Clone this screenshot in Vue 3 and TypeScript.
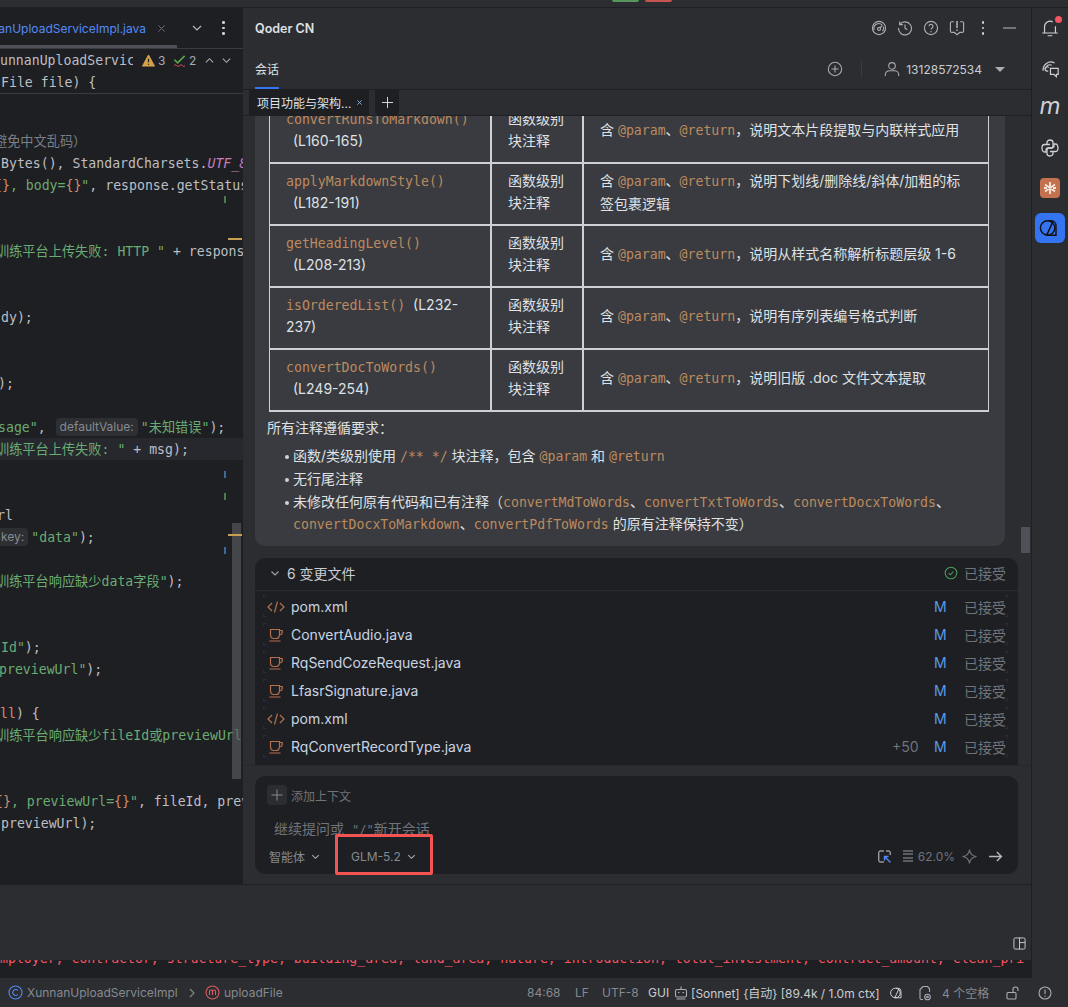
<template>
  <div class="app">
    <div class="top-strip">
      <span class="chip chip-green"></span>
      <span class="chip chip-red"></span>
    </div>

    <div class="workspace">
      <div class="left-col">
        <div class="main-row">
          <!-- editor -->
          <section class="editor">
            <div class="editor-tabs">
              <div class="file-tab-clip"><span class="file-tab">nanUploadServiceImpl.java</span></div>
              <svg class="tab-close" viewBox="0 0 10 10"><path d="M1.5 1.5l7 7M8.5 1.5l-7 7" /></svg>
              <svg class="tab-chev" viewBox="0 0 12 12"><path d="M2 4l4 4 4-4" /></svg>
              <span class="tab-dots"><i></i><i></i><i></i></span>
              <span class="tab-scroll"></span>
            </div>
            <div class="sticky">
              <div class="code-line"><span class="code-inner" style="margin-left: -8px">XunnanUploadService</span></div>
              <div class="code-line"><span class="code-inner" style="margin-left: 1px">File file) {</span></div>
              <div class="inspect">
                <svg class="ins-warn" viewBox="0 0 14 14"><path d="M7 1L13.500 13H.5z" fill="#d5a24a" stroke="#d5a24a" stroke-linejoin="round" /><path d="M7 5v4M7 10.400v1.200" stroke="#1e1f22" stroke-width="1.400" /></svg>
                <span class="ins-num">3</span>
                <svg class="ins-ok" viewBox="0 0 14 14"><path d="M1.500 6l3.500 3.500L12.500 2" stroke="#57a64a" stroke-width="1.700" fill="none" /><path d="M1 12.500q1.500-2 3 0t3 0 3 0 3 0" stroke="#d95757" fill="none" /></svg>
                <span class="ins-num">2</span>
                <svg class="ins-chev up" viewBox="0 0 12 12"><path d="M2 8l4-4 4 4" /></svg>
                <svg class="ins-chev" viewBox="0 0 12 12"><path d="M2 4l4 4 4-4" /></svg>
              </div>
            </div>
            <div class="code">
              <div v-for="(line, i) in codeLines" :key="i" class="code-line" :class="{ current: line.current }">
                <span class="code-inner" :style="{ marginLeft: line.x + 'px' }">
                  <template v-for="(seg, j) in line.segs" :key="j">
                    <span v-if="seg.c === 'hint'" class="hint">{{ seg.t }}</span>
                    <span v-else :class="seg.c">{{ seg.t }}</span>
                  </template>
                </span>
              </div>
              <span class="v-scroll"></span>
              <span v-for="m in marks" :key="m.y" class="mark" :class="m.c" :style="{ top: m.y - 94 + 'px' }"></span>
            </div>
          </section>

          <!-- qoder panel -->
          <section class="panel">
            <div class="panel-title">
              <span class="title-text">Qoder CN</span>
              <div class="title-icons">
                <svg viewBox="0 0 18 18"><circle cx="9" cy="9" r="7.400" /><path d="M3.500 11a5.500 5.500 0 0 1 9-5.500M14 7.500a5.500 5.500 0 0 1-1 5" /><circle cx="9" cy="10" r="1.700" /><path d="M10 9l2.800-3" /></svg>
                <svg viewBox="0 0 18 18"><path d="M3.200 5A7.300 7.300 0 1 1 1.700 9" /><path d="M3 1.600V5.200h3.600" /><path d="M9 5.200V9.300l2.600 1.700" /></svg>
                <svg viewBox="0 0 18 18"><circle cx="9" cy="9" r="7.400" /><path d="M6.800 7a2.200 2.200 0 1 1 3.400 1.900c-.8.5-1.200 1-1.200 1.900" /><path d="M9 12.400v1.300" /></svg>
                <svg viewBox="0 0 18 18"><path d="M5.500 2H3a1.400 1.400 0 0 0-1.400 1.400v9.200A1.400 1.400 0 0 0 3 14h3l3 2.600 3-2.600h3a1.400 1.400 0 0 0 1.400-1.400V3.400A1.400 1.400 0 0 0 15 2h-2.500" /><path d="M9 1v8M9 10.600V12.300" stroke-width="1.800" /></svg>
                <span class="dots"><i></i><i></i><i></i></span>
                <span class="minus"></span>
              </div>
            </div>
            <div class="panel-tabs">
              <span class="tab-active">会话</span>
              <div class="account">
                <svg class="acc-plus" viewBox="0 0 18 18"><circle cx="9" cy="9" r="7.500" /><path d="M9 5v8M5 9h8" /></svg>
                <span class="acc-divider"></span>
                <svg class="acc-user" viewBox="0 0 18 18"><circle cx="9" cy="5.500" r="3.700" /><path d="M1.500 17v-1.500A4.500 4.500 0 0 1 6 11h6a4.500 4.500 0 0 1 4.500 4.500V17" /></svg>
                <span class="acc-name">13128572534</span>
                <span class="caret"></span>
              </div>
            </div>
            <div class="session-row">
              <div class="session-tab">
                <span>项目功能与架构...</span>
                <svg viewBox="0 0 8 8"><path d="M1.500 1.500l5 5M6.500 1.500l-5 5" /></svg>
              </div>
              <div class="session-add">
                <svg viewBox="0 0 14 14"><path d="M7 1v12M1 7h12" /></svg>
              </div>
            </div>

            <div class="scroll-area">
              <div class="msg-card">
                <table class="notes">
                  <colgroup><col class="c1" /><col class="c2" /><col class="c3" /></colgroup>
                  <tbody>
                    <tr v-for="row in rows" :key="row.fn">
                      <td>
                        <code>{{ row.fn }}</code><span :class="row.inline ? 'ln-inline' : 'ln'">{{ row.lines }}</span>
                      </td>
                      <td>函数级别<br />块注释</td>
                      <td>含 <code>@param</code>、<code>@return</code>，{{ row.desc }}</td>
                    </tr>
                  </tbody>
                </table>
                <p class="summary">所有注释遵循要求：</p>
                <ul class="rules">
                  <li>函数/类级别使用 <code>/** */</code> 块注释，包含 <code>@param</code> 和 <code>@return</code></li>
                  <li>无行尾注释</li>
                  <li>未修改任何原有代码和已有注释（<code>convertMdToWords</code>、<code>convertTxtToWords</code>、<code>convertDocxToWords</code>、<code>convertDocxToMarkdown</code>、<code>convertPdfToWords</code> 的原有注释保持不变）</li>
                </ul>
              </div>

              <div class="files-card">
                <div class="files-head">
                  <svg class="chev" viewBox="0 0 12 12"><path d="M2.500 4.500L6 8l3.500-3.500" /></svg>
                  <span class="files-title">6 变更文件</span>
                  <svg class="ok-icon" viewBox="0 0 14 14"><circle cx="7" cy="7" r="5.800" /><path d="M4.600 7.200l1.700 1.600 3-3.200" /></svg>
                  <span class="accepted">已接受</span>
                </div>
                <div class="files-list">
                  <div v-for="(f, i) in files" :key="i" class="file-row">
                    <svg v-if="f.xml" class="file-icon" viewBox="0 0 18 14"><path d="M5 3L1 7l4 4M13 3l4 4-4 4M10.500 1.500l-3 11" /></svg>
                    <svg v-else class="file-icon" viewBox="0 0 18 14"><path d="M3.500 1.500h9v5.500a3.500 3.500 0 0 1-3.500 3.500H7A3.500 3.500 0 0 1 3.500 7zM12.500 2.500h2.700v2.200a2 2 0 0 1-2.700 1.900M2.500 13h11" /></svg>
                    <span class="file-name">{{ f.name }}</span>
                    <span class="file-plus">{{ f.plus }}</span>
                    <span class="file-m">M</span>
                    <span class="accepted">已接受</span>
                  </div>
                </div>
              </div>
              <span class="chat-scroll"></span>
            </div>

            <div class="input-wrap">
              <div class="input-card">
                <div class="ctx-row">
                  <span class="ctx-add"><svg viewBox="0 0 12 12"><path d="M6 .5v11M.5 6h11" /></svg></span>
                  <span>添加上下文</span>
                </div>
                <div class="placeholder">继续提问或<span class="ph-q">"/"</span>新开会话</div>
                <div class="tool-row">
                  <span class="tool-sel">智能体<svg viewBox="0 0 12 12"><path d="M2.500 4.500L6 8l3.500-3.500" /></svg></span>
                  <span class="tool-sel model">GLM-5.2<svg viewBox="0 0 12 12"><path d="M2.500 4.500L6 8l3.500-3.500" /></svg></span>
                  <div class="tool-right">
                    <svg class="t-frame" viewBox="0 0 13 13"><path d="M6 1H2a1.200 1.200 0 0 0-1.200 1.200v8.600A1.200 1.200 0 0 0 2 12h4M8 1h3a1.200 1.200 0 0 1 1.200 1.200V5" stroke="#ced0d6" /><path d="M12.500 12.500L6.500 6.500M6.500 10.500v-4h4" stroke="#548af7" stroke-width="1.400" /></svg>
                    <span class="t-bars"><i></i><i></i><i></i><i></i></span>
                    <span class="t-pct">62.0%</span>
                    <svg class="t-spark" viewBox="0 0 16 16"><path d="M8 .5c.5 4.500 3 7 7.500 7.500-4.500.5-7 3-7.500 7.500C7.500 11 5 8.500.5 8 5 7.500 7.500 5 8 .5z" /></svg>
                    <svg class="t-send" viewBox="0 0 16 12"><path d="M1 6h13.500M9.500 1l5 5-5 5" /></svg>
                  </div>
                </div>
                <span class="annotation"></span>
              </div>
            </div>
          </section>
        </div>

        <div class="tool-panel">
          <svg viewBox="0 0 14 14"><rect x="1" y="1" width="12" height="12" rx="1.500" /><path d="M7 1v12M7 6h6" /></svg>
        </div>
        <div class="console">
          <div class="console-line">mployer, contractor, structure_type, building_area, land_area, nature, introduction, total_investment, contract_amount, clean_pri</div>
        </div>
      </div>

      <aside class="rail">
        <span class="rail-item bell">
          <svg viewBox="0 0 22 22"><path d="M5 16V9.500a6 6 0 0 1 9-5.200M17 9v7M2.500 16.500h17M8.500 19.500h5" /></svg>
          <i class="bell-dot"></i>
        </span>
        <span class="rail-item">
          <svg viewBox="0 0 22 22"><path d="M3.500 14A8.500 8.500 0 0 1 16 5.500M6 12.500a4.800 4.800 0 0 1 7-4.500M9 14a2.300 2.300 0 1 1 .5-3.500" /><path d="M11.500 11.500h8.500v6.500h-2v2.500l-2.800-2.500h-3.700z" /></svg>
        </span>
        <span class="rail-item rail-m">m</span>
        <span class="rail-item">
          <svg viewBox="0 0 20 20">
            <path d="M7 6.500V4.500C7 3 8.300 2 10 2s3 1 3 2.500V8c0 1.100-.9 2-2 2H8.500C7.100 10 6 11.100 6 12.500V14H4.500C3 14 2 12.500 2 10s1-3.500 2.500-3.500H10M9.300 4.300v.01" />
            <path d="M7 6.500V4.500C7 3 8.300 2 10 2s3 1 3 2.500V8c0 1.100-.9 2-2 2H8.500C7.100 10 6 11.100 6 12.500V14H4.500C3 14 2 12.500 2 10s1-3.500 2.500-3.500H10M9.300 4.300v.01" transform="rotate(180 10 10)" />
          </svg>
        </span>
        <span class="rail-item">
          <span class="orange-box">
            <svg viewBox="0 0 20 20"><path d="M10 4v12M5 6.500l10 7M15 6.500l-10 7M4 10h3M13 10h3" /></svg>
          </span>
        </span>
        <span class="rail-item">
          <span class="blue-btn">
            <svg viewBox="0 0 20 20"><circle cx="8" cy="10" r="6" /><path d="M9 4h2a4 4 0 0 1 4 4v8h-6a5 5 0 0 1-3-1M12.500 4.500L7.500 15.500" /></svg>
          </span>
        </span>
      </aside>
    </div>

    <footer class="status">
      <svg class="st-c" viewBox="0 0 15 15"><circle cx="7.500" cy="7.500" r="6.500" /><path d="M10 5.500a3 3 0 1 0 0 4" /></svg>
      <span class="st-class">XunnanUploadServiceImpl</span>
      <svg class="st-sep" viewBox="0 0 8 12"><path d="M2 2l4 4-4 4" /></svg>
      <svg class="st-m" viewBox="0 0 15 15"><circle cx="7.500" cy="7.500" r="6.500" /><path d="M4.500 10V6.500a1.300 1.300 0 0 1 3 0V10M7.500 6.500a1.300 1.300 0 0 1 3 0V10" /></svg>
      <span class="st-fn">uploadFile</span>
      <span class="st-pos">84:68</span>
      <span class="st-lf">LF</span>
      <span class="st-enc">UTF-8</span>
      <span class="st-gui">GUI</span>
      <svg class="st-robot" viewBox="0 0 14 14"><path d="M7 .5v2.500" /><rect x="1.500" y="3.500" width="11" height="7.500" rx="1.500" /><path d="M4 6.500h1.500M8.500 6.500H10M2.500 13h9" /></svg>
      <span class="st-model">[Sonnet] {自动} [89.4k / 1.0m ctx]</span>
      <svg class="st-qoder" viewBox="0 0 20 20"><circle cx="8" cy="10" r="6" /><path d="M9 4h2a4 4 0 0 1 4 4v8h-6a5 5 0 0 1-3-1M12.500 4.500L7.500 15.500" /></svg>
      <svg class="st-file" viewBox="0 0 14 16"><path d="M5 1.500h4.500l2 2V7M5 14.500H3.500a1.500 1.500 0 0 1-1.500-1.500V4.500l3-3" /><circle cx="9.500" cy="12" r="2.800" /><circle cx="9.500" cy="12" r=".8" /></svg>
      <span class="st-indent">4 个空格</span>
      <svg class="st-lock" viewBox="0 0 14 14"><rect x="1" y="6.500" width="9" height="6.500" rx="1" /><path d="M7 6.500V3.500a2.500 2.500 0 0 1 5 0V5" /></svg>
      <svg class="st-warn" viewBox="0 0 14 14"><circle cx="7" cy="7" r="6" /><path d="M7 3.500v4.500M7 9.500v1.200" /></svg>
    </footer>
  </div>
</template>

<script setup lang="ts">
interface Seg { t: string; c: string }
interface CodeLine { x: number; segs: Seg[]; current?: boolean }

const s = (t: string, c = 'plain'): Seg => ({ t, c })

const blank = (): CodeLine => ({ x: 0, segs: [] })

const codeLines: CodeLine[] = [
  { x: -6, segs: [s('避免中文乱码）', 'cmt')] },
  { x: 1, segs: [s('Bytes(), StandardCharsets.'), s('UTF_8);', 'field')] },
  { x: -6, segs: [s('{}', 'kw'), s(', body=', 'str'), s('{}', 'kw'), s('"', 'str'), s(', response.getStatusLine()')] },
  blank(),
  blank(),
  { x: -4, segs: [s('训练平台上传失败: HTTP " ', 'str'), s('+ response.getStatus')] },
  blank(),
  blank(),
  { x: 1, segs: [s('dy);')] },
  blank(),
  blank(),
  { x: -2, segs: [s(');')] },
  blank(),
  { x: -2, segs: [s('sage"', 'str'), s(', '), s('defaultValue:', 'hint'), s('"未知错误"', 'str'), s(');')] },
  { x: -4, current: true, segs: [s('训练平台上传失败: " ', 'str'), s('+ msg);')] },
  blank(),
  blank(),
  { x: -3, segs: [s('rl')] },
  { x: -5, segs: [s('key:', 'hint'), s('"data"', 'str'), s(');')] },
  blank(),
  { x: -4, segs: [s('训练平台响应缺少data字段"', 'str'), s(');')] },
  blank(),
  blank(),
  { x: 1, segs: [s('Id"', 'str'), s(');')] },
  { x: -1, segs: [s('previewUrl"', 'str'), s(');')] },
  blank(),
  { x: 0, segs: [s('ll', 'kw'), s(') {')] },
  { x: -4, segs: [s('训练平台响应缺少fileId或previewUrl', 'str')] },
  blank(),
  blank(),
  { x: -5, segs: [s('{}', 'kw'), s(', previewUrl=', 'str'), s('{}', 'kw'), s('"', 'str'), s(', fileId, previewUrl')] },
  { x: 1, segs: [s('previewUrl);')] },
  blank(),
  blank(),
]

const marks = [
  { y: 196, c: 'm-green' },
  { y: 238, c: 'm-orange' },
  { y: 471, c: 'm-blue' },
  { y: 493, c: 'm-green' },
  { y: 534, c: 'm-orange' },
  { y: 547, c: 'm-blue' },
]

const rows = [
  { fn: 'convertRunsToMarkdown()', lines: '(L160-165)', inline: false, desc: '说明文本片段提取与内联样式应用' },
  { fn: 'applyMarkdownStyle()', lines: '(L182-191)', inline: false, desc: '说明下划线/删除线/斜体/加粗的标签包裹逻辑' },
  { fn: 'getHeadingLevel()', lines: '(L208-213)', inline: false, desc: '说明从样式名称解析标题层级 1-6' },
  { fn: 'isOrderedList()', lines: '(L232-237)', inline: true, desc: '说明有序列表编号格式判断' },
  { fn: 'convertDocToWords()', lines: '(L249-254)', inline: false, desc: '说明旧版 .doc 文件文本提取' },
]

const files = [
  { name: 'pom.xml', xml: true, plus: '' },
  { name: 'ConvertAudio.java', xml: false, plus: '' },
  { name: 'RqSendCozeRequest.java', xml: false, plus: '' },
  { name: 'LfasrSignature.java', xml: false, plus: '' },
  { name: 'pom.xml', xml: true, plus: '' },
  { name: 'RqConvertRecordType.java', xml: false, plus: '+50' },
]
</script>

<style>
html,
body {
  margin: 0;
  background: #2b2d30;
}
</style>

<style scoped>
.app {
  width: 1068px;
  height: 1007px;
  display: flex;
  flex-direction: column;
  overflow: hidden;
  background: #2b2d30;
  color: #dfe1e5;
  font-family: Inter, "Noto Sans CJK SC", sans-serif;
  font-size: 14px;
}

svg {
  display: block;
  fill: none;
  stroke: currentColor;
  flex: 0 0 auto;
}

/* top strip */
.top-strip {
  height: 7px;
  flex: 0 0 auto;
  display: flex;
  gap: 6px;
  padding-left: 612px;
  border-bottom: 1px solid #1e1f22;
}
.chip {
  width: 27px;
  height: 2px;
  border-radius: 0 0 4px 4px;
}
.chip-green { background: #57965c; }
.chip-red { background: #c75450; }

.workspace {
  flex: 1;
  min-height: 0;
  display: flex;
}
.left-col {
  width: 1031px;
  flex: 0 0 auto;
  display: flex;
  flex-direction: column;
}
.main-row {
  height: 876px;
  flex: 0 0 auto;
  display: flex;
  border-bottom: 1px solid #1e1f22;
  box-sizing: content-box;
}

/* editor */
.editor {
  width: 243px;
  flex: 0 0 auto;
  background: #1e1f22;
  display: flex;
  flex-direction: column;
  overflow: hidden;
  font-family: "DejaVu Sans Mono", "Noto Sans CJK SC", monospace;
  font-size: 13.2px;
  color: #bcbec4;
}
.editor-tabs {
  height: 40px;
  flex: 0 0 auto;
  position: relative;
  display: flex;
  align-items: center;
  border-bottom: 1px solid #393b40;
  color: #868a91;
  font-family: Inter, sans-serif;
}
.file-tab-clip {
  width: 146px;
  display: flex;
  justify-content: flex-end;
  overflow: hidden;
}
.file-tab {
  flex: 0 0 auto;
  color: #548af7;
  font-size: 12px;
  white-space: nowrap;
}
.tab-close {
  width: 9px;
  height: 9px;
  margin-left: 11px;
  stroke: #6f737a;
}
.tab-chev {
  width: 12px;
  height: 12px;
  margin-left: 25px;
  stroke: #b4b8bf;
  stroke-width: 1.2;
}
.tab-dots {
  display: flex;
  flex-direction: column;
  gap: 3px;
  margin-left: 19px;
}
.tab-dots i,
.dots i {
  width: 2.5px;
  height: 2.5px;
  border-radius: 50%;
  background: #ced0d6;
  display: block;
}
.tab-scroll {
  position: absolute;
  left: 0;
  bottom: 0;
  width: 177px;
  height: 3px;
  background: #4e5157;
}
.sticky {
  position: relative;
  flex: 0 0 auto;
  border-bottom: 1px solid #393b40;
}
.code-line {
  height: 22px;
  line-height: 24px;
  white-space: pre;
  display: flex;
  overflow: hidden;
}
.code-inner {
  display: block;
  flex: 0 0 auto;
}
.inspect {
  position: absolute;
  left: 133px;
  right: 0;
  top: 0;
  height: 22px;
  background: #1e1f22;
  display: flex;
  align-items: center;
  font-family: Inter, sans-serif;
  font-size: 12px;
  color: #a8adb5;
}
.ins-warn {
  width: 13px;
  height: 13px;
  margin-left: 9px;
  stroke: none;
}
.ins-num { margin-left: 3px; width: 8px; }
.ins-ok {
  width: 13px;
  height: 13px;
  margin-left: 7px;
}
.ins-chev {
  width: 11px;
  height: 11px;
  stroke: #a8adb5;
  stroke-width: 1.2;
  margin-left: 6px;
}
.ins-chev.up { margin-left: 7px; }

.code {
  flex: 1;
  position: relative;
  padding-top: 36px;
  min-height: 0;
}
.current { background: #26282e; }
.plain { color: #bcbec4; }
.str { color: #6aab73; }
.kw { color: #cf8e6d; }
.cmt { color: #7a7e85; }
.field { color: #c77dbb; font-style: italic; }
.hint {
  display: inline-block;
  font-family: Inter, sans-serif;
  font-size: 12px;
  line-height: 18px;
  height: 18px;
  padding: 0 4px;
  margin: 0 3px 0 2px;
  border-radius: 4px;
  background: #2d2f33;
  color: #868a91;
  vertical-align: 1px;
}
.v-scroll {
  position: absolute;
  left: 232px;
  top: 429px;
  width: 9px;
  height: 256px;
  background: rgba(90, 92, 96, 0.65);
}
.mark {
  position: absolute;
  height: 5px;
  width: 2px;
  left: 224px;
}
.m-green { background: #4a7a54; height: 7px; }
.m-blue { background: #3d6a9e; height: 7px; }
.m-orange {
  background: #c9a050;
  left: 228px;
  width: 14px;
  height: 2px;
}

/* panel */
.panel {
  flex: 1;
  min-width: 0;
  display: flex;
  flex-direction: column;
  background: #2b2d30;
}
.panel-title {
  height: 40px;
  flex: 0 0 auto;
  display: flex;
  align-items: center;
  justify-content: space-between;
  padding: 0 9px 0 12px;
}
.title-text {
  font-size: 12.5px;
  font-weight: 600;
  color: #dfe1e5;
}
.title-icons {
  display: flex;
  align-items: center;
  color: #a8adb5;
}
.title-icons svg {
  width: 16px;
  height: 16px;
  margin: 0 5px;
  stroke-width: 1.3;
}
.dots {
  width: 26px;
  display: flex;
  flex-direction: column;
  align-items: center;
  gap: 3px;
}
.minus {
  display: block;
  width: 13px;
  height: 1.5px;
  background: #6f737a;
  margin: 0 6px 0 7px;
}
.panel-tabs {
  height: 41px;
  flex: 0 0 auto;
  display: flex;
  justify-content: space-between;
  padding: 0 26px 0 12px;
  border-bottom: 1px solid #1e1f22;
}
.tab-active {
  width: 24px;
  height: 39px;
  line-height: 43px;
  font-size: 12px;
  text-align: center;
  border-bottom: 2px solid #3574f0;
  white-space: nowrap;
}
.account {
  display: flex;
  align-items: center;
  height: 42px;
  color: #a8adb5;
}
.acc-plus {
  width: 16px;
  height: 16px;
  stroke-width: 1.2;
}
.acc-divider {
  width: 1px;
  height: 17px;
  margin: 0 22px 0 18px;
  background: #393b40;
}
.acc-user {
  width: 16px;
  height: 16px;
  stroke-width: 1.2;
}
.acc-name {
  font-size: 12px;
  margin-left: 6px;
  color: #c9ccd3;
}
.caret {
  width: 0;
  height: 0;
  margin-left: 13px;
  border-left: 5px solid transparent;
  border-right: 5px solid transparent;
  border-top: 5px solid #a8adb5;
}
.session-row {
  height: 25px;
  flex: 0 0 auto;
  display: flex;
  gap: 6px;
  padding-left: 6px;
  border-bottom: 1px solid #1e1f22;
}
.session-tab {
  width: 120px;
  box-sizing: border-box;
  display: flex;
  align-items: center;
  justify-content: space-between;
  padding: 0 6px 0 8px;
  background: #1e1f22;
  font-size: 12px;
  color: #dfe1e5;
}
.session-tab svg {
  width: 7px;
  height: 7px;
  stroke: #8db6ea;
}
.session-add {
  width: 24px;
  display: flex;
  align-items: center;
  justify-content: center;
  background: #1e1f22;
  border-radius: 0 0 4px 4px;
  color: #dfe1e5;
}
.session-add svg {
  width: 13px;
  height: 13px;
}

.scroll-area {
  height: 650px;
  flex: 0 0 auto;
  overflow: hidden;
  position: relative;
  border-bottom: 1px solid #26282c;
  box-sizing: border-box;
  padding-left: 12px;
}
.msg-card {
  width: 750px;
  box-sizing: border-box;
  margin-top: -14px;
  padding: 0 0 10px 14px;
  background: #393b40;
  border-radius: 0 0 10px 10px;
}
code {
  font-family: "DejaVu Sans Mono", monospace;
  font-size: 13.2px;
  line-height: 1;
  color: #bd8a5e;
}
.notes {
  width: 720px;
  table-layout: fixed;
  border-collapse: separate;
  border-spacing: 0;
  line-height: 22.4px;
  color: #dfe1e5;
}
.c1 { width: 223px; }
.c2 { width: 92px; }
.c3 { width: 405px; }
.notes td {
  height: 62px;
  box-sizing: border-box;
  padding: 6px 16px 9px;
  vertical-align: top;
  border-right: 2px solid #ced0d6;
  border-bottom: 2px solid #ced0d6;
}
.notes td:first-child {
  border-left: 1px solid #ced0d6;
  padding-left: 16px;
}
.notes td:last-child {
  border-right: 1px solid #ced0d6;
  vertical-align: middle;
}
.ln {
  display: block;
  padding-left: 7px;
}
.ln-inline { margin-left: 8px; }
.summary {
  margin: 5px 0 6px -2px;
  line-height: 22px;
}
.rules {
  margin: 0;
  padding: 0 0 0 24px;
  list-style: none;
  width: 700px;
  line-height: 22.4px;
}
.rules li {
  position: relative;
  margin-bottom: 0.6px;
}
.rules li:last-child { margin-bottom: 0; }
.rules li::before {
  content: '';
  position: absolute;
  left: -8px;
  top: 10px;
  width: 4px;
  height: 4px;
  border-radius: 50%;
  background: #ced0d6;
}
.files-card {
  width: 763px;
  margin-top: 12px;
  background: #1e1f22;
  border-radius: 10px 10px 0 0;
}
.files-head {
  height: 30px;
  display: flex;
  align-items: center;
  padding: 0 12px 2px 14px;
  border-bottom: 1px solid #2b2d30;
  box-sizing: content-box;
}
.chev {
  width: 12px;
  height: 12px;
  stroke: #9fa2a8;
  stroke-width: 1.2;
}
.files-title {
  margin-left: 6px;
  color: #c9ccd3;
  font-size: 14px;
  flex: 1;
}
.ok-icon {
  width: 14px;
  height: 14px;
  stroke: #4a9a5a;
  stroke-width: 1.1;
  margin-right: 6px;
}
.accepted {
  width: 42px;
  color: #6f737a;
  white-space: nowrap;
}
.files-list { padding: 2px 12px 8px 8px; }
.file-row {
  height: 28px;
  display: flex;
  align-items: center;
  position: relative;
}
.file-row::before {
  content: '';
  position: absolute;
  inset: 2px -2px 4px 0;
  --c: linear-gradient(#262d42, #262d42);
  background:
    var(--c) left top / 3px 1px no-repeat,
    var(--c) left top / 1px 3px no-repeat,
    var(--c) right top / 3px 1px no-repeat,
    var(--c) right top / 1px 3px no-repeat,
    var(--c) left bottom / 3px 1px no-repeat,
    var(--c) left bottom / 1px 3px no-repeat,
    var(--c) right bottom / 3px 1px no-repeat,
    var(--c) right bottom / 1px 3px no-repeat;
}
.file-icon {
  width: 18px;
  height: 14px;
  margin-left: 4px;
  stroke: #b4704e;
  stroke-width: 1.2;
}
.file-name {
  margin-left: 6px;
  color: #c9d4e2;
  flex: 1;
}
.file-plus {
  color: #6f737a;
  width: 42px;
}
.file-m {
  color: #5a9bea;
  width: 30px;
}
.chat-scroll {
  position: absolute;
  left: 778px;
  top: 411px;
  width: 9px;
  height: 26px;
  background: #4e5157;
}

/* input */
.input-wrap {
  flex: 1;
  padding: 10px 12px;
  box-sizing: border-box;
}
.input-card {
  width: 763px;
  height: 98px;
  box-sizing: border-box;
  padding: 9px 15px 7px 12px;
  position: relative;
  background: #1e1f22;
  border-radius: 10px;
  color: #6f737a;
}
.ctx-row {
  height: 20px;
  display: flex;
  align-items: center;
  gap: 4px;
  font-size: 12px;
}
.ctx-add {
  width: 20px;
  height: 20px;
  display: flex;
  align-items: center;
  justify-content: center;
  border-radius: 4px;
  background: #2b2d30;
  color: #868a91;
}
.ctx-add svg {
  width: 12px;
  height: 12px;
}
.placeholder {
  margin: 13px 0 5px 7px;
  line-height: 22px;
  height: 22px;
}
.ph-q {
  font-family: "DejaVu Sans Mono", monospace;
  font-size: 12px;
  line-height: 1;
  margin-left: 8px;
}
.tool-row {
  height: 22px;
  display: flex;
  align-items: center;
  padding-left: 2px;
  font-size: 12px;
}
.tool-sel {
  display: flex;
  align-items: center;
  gap: 5px;
  color: #868a91;
}
.tool-sel svg {
  width: 11px;
  height: 11px;
  stroke: #a8adb5;
  stroke-width: 1.2;
}
.model { margin-left: 30px; }
.tool-right {
  margin-left: auto;
  display: flex;
  align-items: center;
}
.t-frame {
  width: 13px;
  height: 13px;
}
.t-bars {
  display: flex;
  flex-direction: column;
  gap: 1.300px;
  margin-left: 12px;
}
.t-bars i {
  display: block;
  width: 10px;
  height: 2px;
  background: #5a5d63;
}
.t-pct {
  margin-left: 5px;
  color: #6f737a;
}
.t-spark {
  width: 15px;
  height: 15px;
  margin-left: 7px;
  stroke: #6f737a;
  stroke-width: 1.2;
}
.t-send {
  width: 15px;
  height: 11px;
  margin-left: 11px;
  stroke: #b4b8bf;
  stroke-width: 1.5;
}
.annotation {
  position: absolute;
  left: 80px;
  top: 58px;
  width: 98px;
  height: 41px;
  box-sizing: border-box;
  border: 3px solid #f45353;
  border-radius: 2px;
}

/* bottom */
.tool-panel {
  height: 75px;
  flex: 0 0 auto;
  display: flex;
  align-items: flex-end;
  justify-content: flex-end;
  padding: 0 5px 10px 0;
  box-sizing: border-box;
  color: #ced0d6;
}
.tool-panel svg {
  width: 13px;
  height: 13px;
}
.console {
  height: 18px;
  flex: 0 0 auto;
  background: #1e1f22;
  overflow: hidden;
}
.console-line {
  margin-top: -12px;
  margin-left: 0;
  height: 22px;
  line-height: 22px;
  white-space: pre;
  color: #f75464;
  font-family: "DejaVu Sans Mono", monospace;
  font-size: 13.2px;
}

/* rail */
.rail {
  flex: 1;
  border-left: 1px solid #1e1f22;
  display: flex;
  flex-direction: column;
  align-items: center;
  color: #ced0d6;
}
.rail-item {
  height: 40px;
  width: 36px;
  flex: 0 0 auto;
  position: relative;
  display: flex;
  align-items: center;
  justify-content: center;
}
.rail-item svg {
  width: 20px;
  height: 20px;
  stroke-width: 1.3;
}
.bell-dot {
  position: absolute;
  left: 23px;
  top: 8px;
  width: 7px;
  height: 7px;
  border-radius: 50%;
  background: #f75464;
}
.rail-m {
  font-family: Inter, sans-serif;
  font-style: italic;
  font-size: 24px;
  line-height: 40px;
  padding-bottom: 4px;
  box-sizing: border-box;
}
.orange-box {
  width: 20px;
  height: 20px;
  border-radius: 4px;
  background: #c3714e;
  color: #f5e6dc;
  display: block;
}
.rail-item .orange-box svg { stroke-width: 1.8; }
.blue-btn {
  width: 30px;
  height: 30px;
  border-radius: 6px;
  background: #3574f0;
  color: #111;
  display: flex;
  align-items: center;
  justify-content: center;
}
.rail-item .blue-btn svg {
  width: 24px;
  height: 24px;
  stroke-width: 1.2;
}

/* status bar */
.status {
  height: 29px;
  flex: 0 0 auto;
  display: flex;
  align-items: center;
  font-size: 12px;
  color: #868a91;
  white-space: nowrap;
}
.status svg {
  stroke-width: 1.1;
}
.st-c {
  width: 15px;
  height: 15px;
  margin-left: 8px;
  stroke: #548af7;
}
.st-class { margin-left: 4px; width: 153px; }
.st-sep {
  width: 8px;
  height: 12px;
  margin-left: 8px;
}
.st-m {
  width: 15px;
  height: 15px;
  margin-left: 9px;
  stroke: #db5c5c;
}
.st-fn { margin-left: 4px; width: 303px; }
.st-pos { width: 48px; }
.st-lf { width: 27px; }
.st-enc { width: 46px; }
.st-gui { color: #c9ccd3; width: 26px; }
.st-robot {
  width: 14px;
  height: 14px;
  stroke: #a8adb5;
}
.st-model {
  margin-left: 3px;
  width: 198px;
  color: #c9ccd3;
}
.st-qoder {
  width: 16px;
  height: 16px;
  stroke: #dfe1e5;
}
.st-file {
  width: 14px;
  height: 16px;
  margin-left: 13px;
  stroke: #a8adb5;
}
.st-indent { margin-left: 10px; width: 64px; }
.st-lock {
  width: 14px;
  height: 14px;
  stroke: #a8adb5;
}
.st-warn {
  width: 14px;
  height: 14px;
  margin-left: 18px;
  stroke: #a8adb5;
}
</style>
